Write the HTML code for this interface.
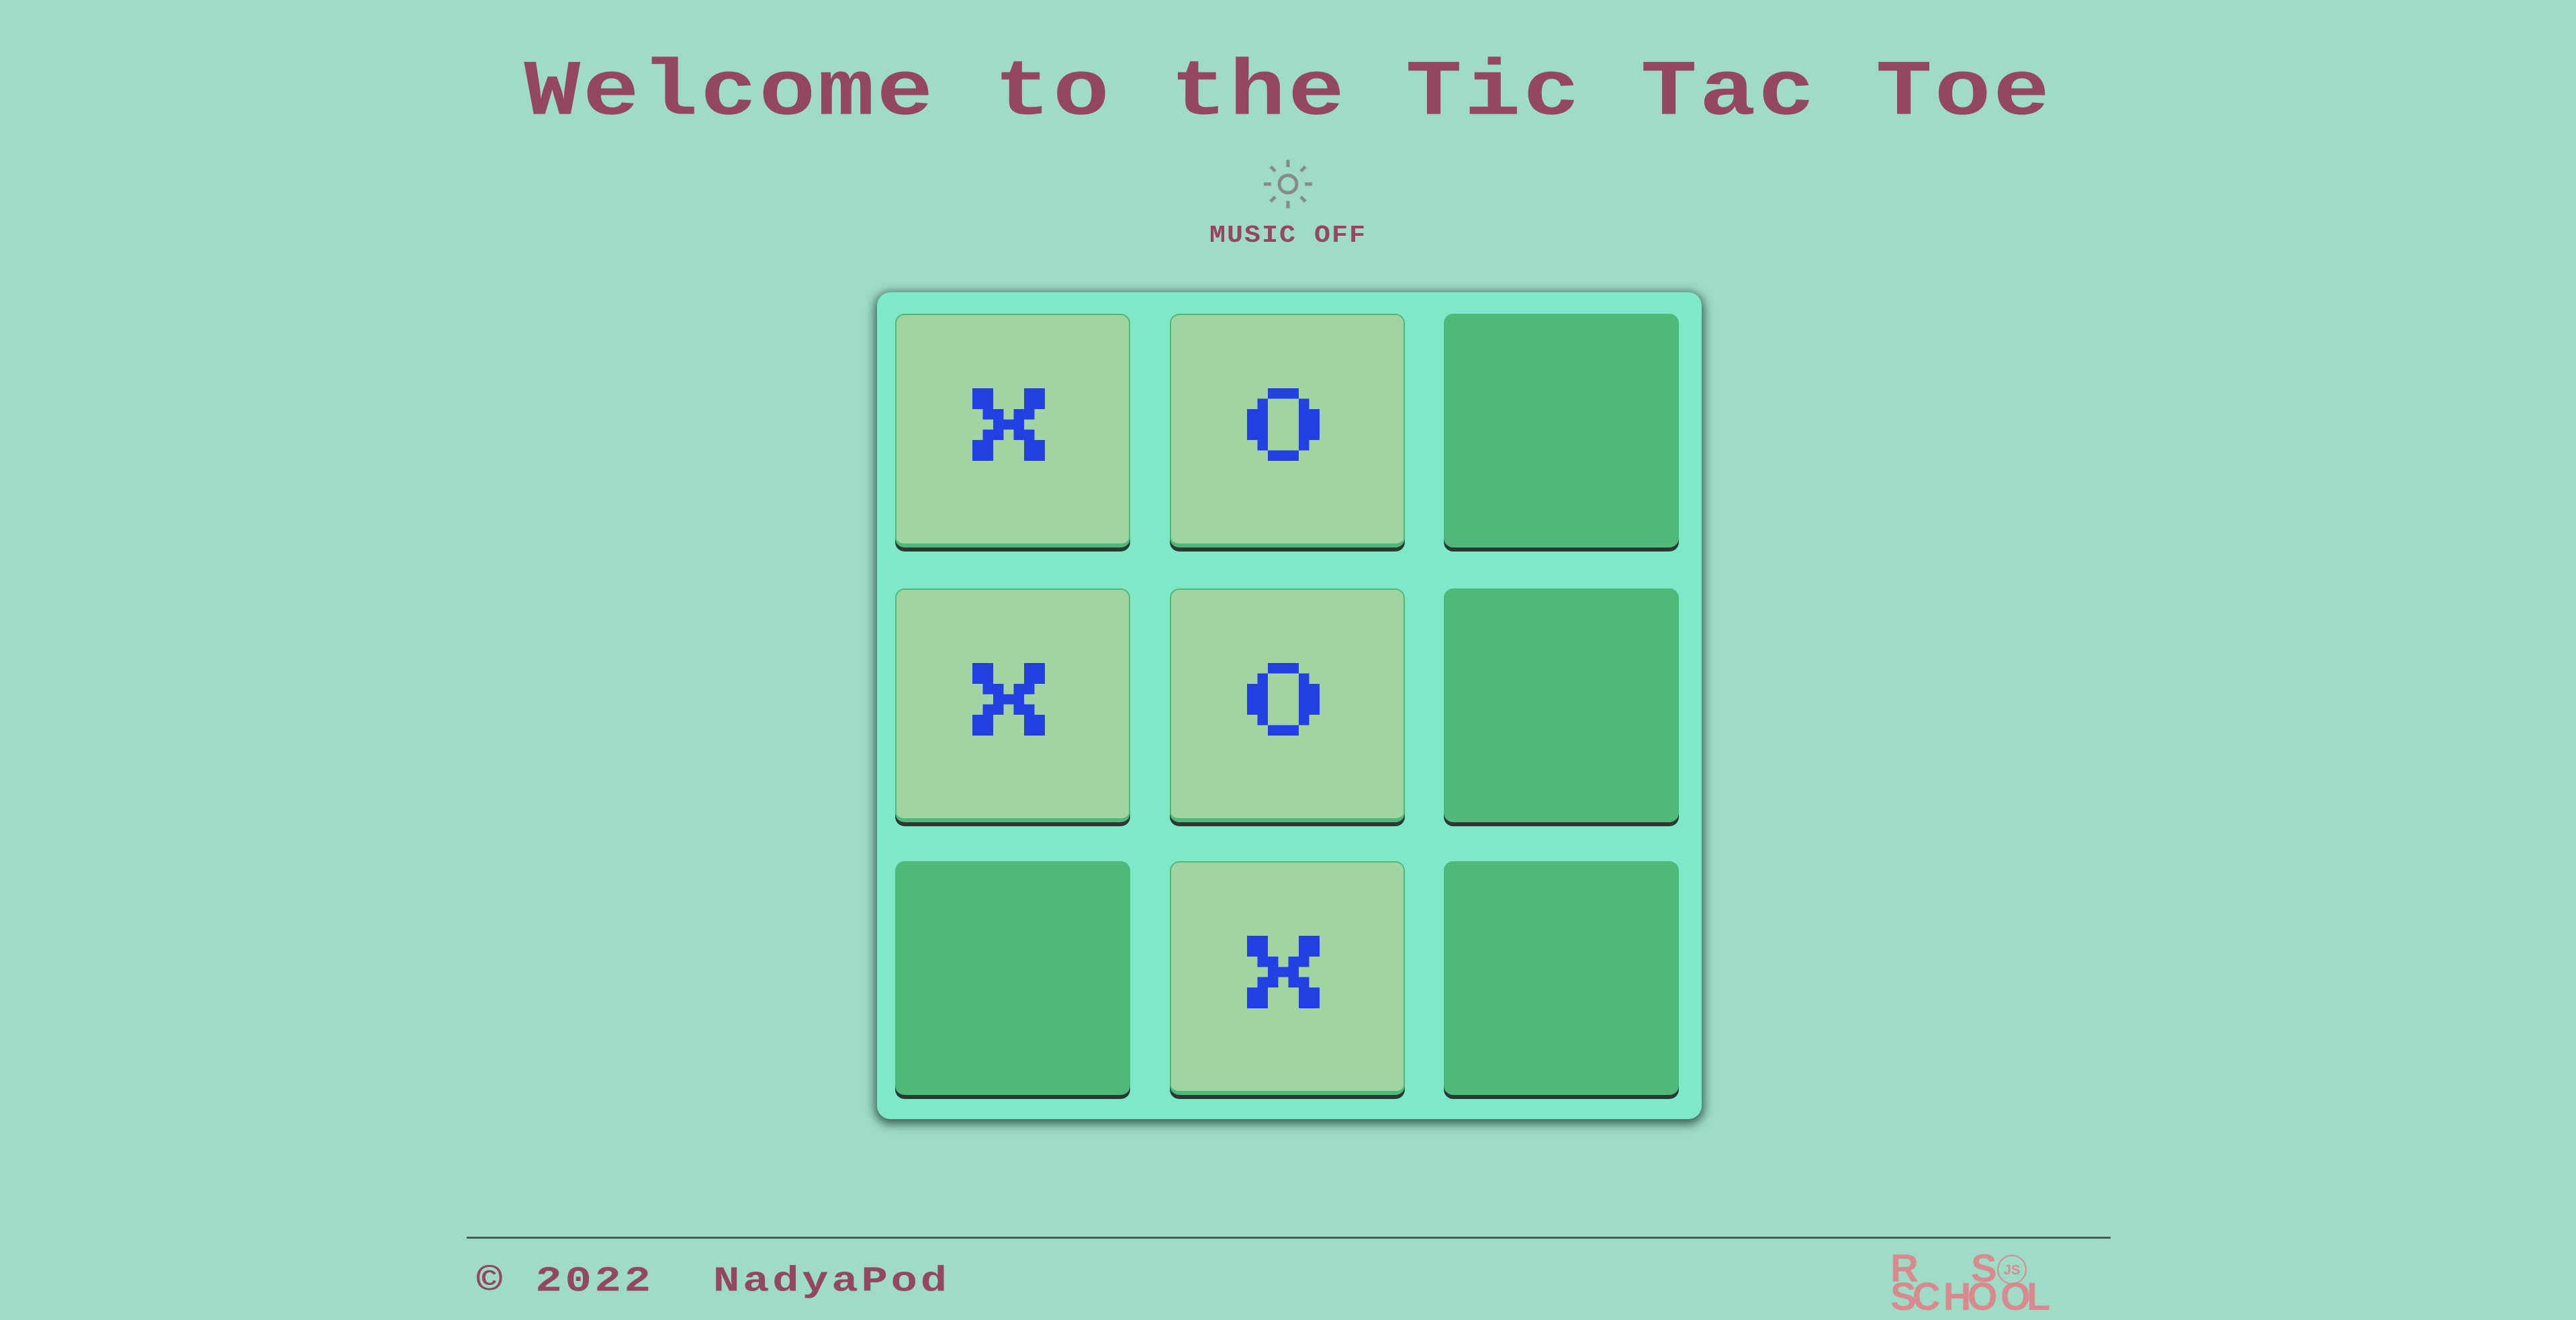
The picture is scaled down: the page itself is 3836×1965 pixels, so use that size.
<!DOCTYPE html>
<html><head><meta charset="utf-8"><style>
html,body{margin:0;padding:0}
body{width:3836px;height:1965px;background:#9fdcc8;position:relative;overflow:hidden;font-family:"Liberation Mono",monospace;font-weight:bold}
.title{position:absolute;left:0;width:3836px;top:52px;text-align:center;font-size:140px;letter-spacing:3.5px;color:#934760;white-space:pre;line-height:160px;transform:scaleY(0.84);transform-origin:50% 126px}
.music{position:absolute;left:0;width:3836px;top:330px;text-align:center;font-size:40px;letter-spacing:2px;color:#934760;line-height:44px;transform:scaleY(0.9)}
.board{position:absolute;left:1306px;top:435px;width:1228px;height:1231px;background:#7fe8c9;border-radius:20px;box-shadow:0 4px 14px 4px rgba(30,60,50,.75)}
.cell{position:absolute;width:350px;height:348px;border-radius:14px;box-shadow:0 6px 0 #2a3a33}
.f{background:#a0d4a2;border:2px solid #4fb97a;border-bottom-width:6px;box-sizing:border-box}
.e{background:#4fb97a}
.cell svg{position:absolute;left:113px;top:109px}
.line{position:absolute;left:695px;top:1841px;width:2448px;height:3px;background:#4a5c55}
.foot{position:absolute;left:709px;top:1884px;font-size:66px;letter-spacing:4.5px;color:#934760;white-space:pre;line-height:60px;transform:scaleY(0.8);transform-origin:0 0}
.rs{position:absolute;font-family:"Liberation Sans",sans-serif;font-weight:bold;color:#d98a8f;font-size:58px;line-height:58px;letter-spacing:-6px}
</style></head><body>
<div class="title">Welcome to the Tic Tac Toe</div>
<svg style="position:absolute;left:1878px;top:234px" width="80" height="80" viewBox="0 0 80 80" stroke="#8a8a8a" stroke-width="5" fill="none">
<circle cx="40" cy="40" r="13"/>
<line x1="40" y1="4" x2="40" y2="15"/><line x1="40" y1="65" x2="40" y2="76"/>
<line x1="4" y1="40" x2="15" y2="40"/><line x1="65" y1="40" x2="76" y2="40"/>
<line x1="14" y1="14" x2="21" y2="21"/><line x1="59" y1="59" x2="66" y2="66"/>
<line x1="66" y1="14" x2="59" y2="21"/><line x1="14" y1="66" x2="21" y2="59"/>
</svg>
<div class="music">MUSIC OFF</div>
<div class="board">
<svg width="0" height="0" style="position:absolute"><defs>
<g id="X" fill="#2340e0"><rect x="0" y="0" width="2" height="2"/><rect x="5" y="0" width="2" height="2"/><rect x="1" y="2" width="2" height="1"/><rect x="4" y="2" width="2" height="1"/><rect x="2" y="3" width="3" height="1"/><rect x="1" y="4" width="2" height="1"/><rect x="4" y="4" width="2" height="1"/><rect x="0" y="5" width="2" height="2"/><rect x="5" y="5" width="2" height="2"/></g>
<g id="O" fill="#2340e0"><rect x="2" y="0" width="3" height="1"/><rect x="1" y="1" width="1" height="1"/><rect x="5" y="1" width="1" height="1"/><rect x="0" y="2" width="2" height="3"/><rect x="5" y="2" width="2" height="3"/><rect x="1" y="5" width="1" height="1"/><rect x="5" y="5" width="1" height="1"/><rect x="2" y="6" width="3" height="1"/></g>
</defs></svg>
<div class="cell f" style="left:27px;top:32px"><svg width="108" height="108" viewBox="0 0 7 7" shape-rendering="crispEdges"><use href="#X"/></svg></div>
<div class="cell f" style="left:436px;top:32px"><svg width="108" height="108" viewBox="0 0 7 7" shape-rendering="crispEdges"><use href="#O"/></svg></div>
<div class="cell e" style="left:844px;top:32px"></div>
<div class="cell f" style="left:27px;top:441px"><svg width="108" height="108" viewBox="0 0 7 7" shape-rendering="crispEdges"><use href="#X"/></svg></div>
<div class="cell f" style="left:436px;top:441px"><svg width="108" height="108" viewBox="0 0 7 7" shape-rendering="crispEdges"><use href="#O"/></svg></div>
<div class="cell e" style="left:844px;top:441px"></div>
<div class="cell e" style="left:27px;top:847px"></div>
<div class="cell f" style="left:436px;top:847px"><svg width="108" height="108" viewBox="0 0 7 7" shape-rendering="crispEdges"><use href="#X"/></svg></div>
<div class="cell e" style="left:844px;top:847px"></div>
</div>
<div class="line"></div>
<div class="foot">© 2022  NadyaPod</div>
<div class="rs" style="left:2815px;top:1860px">R</div>
<div class="rs" style="left:2935px;top:1860px">S</div>
<svg style="position:absolute;left:2972px;top:1866px" width="48" height="48"><circle cx="24" cy="24" r="21" fill="none" stroke="#d98a8f" stroke-width="2"/><text x="24" y="31" text-anchor="middle" font-family="Liberation Sans" font-weight="bold" font-size="20" fill="#d98a8f">JS</text></svg>
<div class="rs" style="left:2815px;top:1902px">SC HO OL</div>
</body></html>
